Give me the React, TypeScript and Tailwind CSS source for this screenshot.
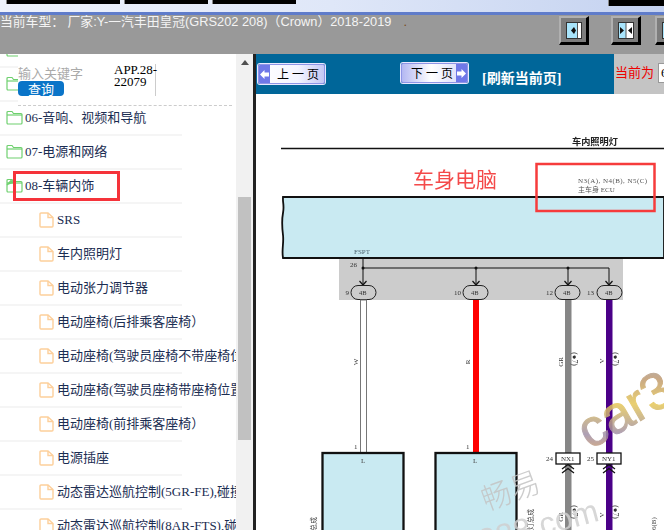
import React from "react";

const serif = "font-['Liberation_Serif','Noto_Sans_CJK_SC',serif]";

function Folder({ open }: { open?: boolean }) {
  return (
    <svg width="17" height="15" viewBox="0 0 17 15" className="shrink-0" fill="none" stroke="#6fd06f" strokeWidth="1.200">
      <path d="M1 13V2.500a1 1 0 0 1 1-1h4l1.500 2H15a1 1 0 0 1 1 1V13a1 1 0 0 1-1 1H2a1 1 0 0 1-1-1z" />
      <path d="M1 5h15" />
      {open && <path d="M1 7 5 2.500l3 2.500" fill="#6fd06f" />}
    </svg>
  );
}

function FileIcon() {
  return (
    <svg width="15" height="16" viewBox="0 0 15 16" className="shrink-0" fill="none" stroke="#fdcf9a" strokeWidth="1.400">
      <path d="M1 2a1 1 0 0 1 1-1H9l5 4.500V14a1 1 0 0 1-1 1H2a1 1 0 0 1-1-1z" />
      <path d="M9 1v4.500h5" />
    </svg>
  );
}

const folders = ["", "", "06-音响、视频和导航", "07-电源和网络", "08-车辆内饰"];
const files = [
  "SRS",
  "车内照明灯",
  "电动张力调节器",
  "电动座椅(后排乘客座椅）",
  "电动座椅(驾驶员座椅不带座椅位置记忆)",
  "电动座椅(驾驶员座椅带座椅位置记忆)",
  "电动座椅(前排乘客座椅）",
  "电源插座",
  "动态雷达巡航控制(5GR-FE),碰撞预警",
  "动态雷达巡航控制(8AR-FTS),碰撞预警",
];

function Row({ children, indent }: { children: React.ReactNode; indent?: boolean }) {
  return (
    <div className={`relative flex h-[34px] shrink-0 items-center whitespace-nowrap pb-[3px] text-[13px] text-[#1b2d52] ${indent ? "gap-[3px] pl-[39px]" : "gap-[2px] pl-[6px]"}`}>
      {children}
      <div className="absolute bottom-0 left-0 h-[2px] w-[182px] bg-[#f5f5f5]" />
    </div>
  );
}

function IconButton({ kind }: { kind: number }) {
  return (
    <div className="flex h-[29px] w-[30px] shrink-0 items-center justify-center border-2 border-b-[3px] border-r-[3px] border-t-[#b0b0b0] border-l-[#b0b0b0] border-r-black border-b-black bg-[#7d7d7d]">
      <svg width="16" height="17" viewBox="0 0 16 17">
        <rect x="0.500" y="0.500" width="15" height="16" fill="#a8e4fb" stroke="#333" />
        {kind === 0 ? (
          <>
            <rect x="12" y="1" width="3" height="15" fill="#fff" />
            <path d="M11.500 1v15" stroke="#555" />
            <path d="M5 8.500 8 5l2 3.500L8 12z" fill="#111" />
          </>
        ) : (
          <>
            <rect x="8" y="1" width="7" height="15" fill="#fff" />
            <path d="M8 1v15" stroke="#555" />
            <path d="M2 5l4 3.500L2 12zM14 5l-4 3.500 4 3.500z" fill="#111" />
          </>
        )}
      </svg>
    </div>
  );
}

function PageButton({ label, dir }: { label: string; dir: "l" | "r" }) {
  const arrow = (
    <span className="flex h-full w-[11px] shrink-0 items-center justify-center bg-[#6f78e8]">
      <svg width="9" height="9" viewBox="0 0 9 9">
        <path d={dir === "l" ? "M0 4.500 4.500 0v2.500H9v4H4.500V9z" : "M9 4.500 4.500 0v2.500H0v4h4.500V9z"} fill="#fff" />
      </svg>
    </span>
  );
  return (
    <div className={`flex h-[20px] w-[67px] items-stretch overflow-hidden rounded-[2px] border border-[#8f95e6] shadow-[0_0_0_1px_#e8e8ff] ${dir === "l" ? "bg-[linear-gradient(90deg,#ffffff,#f4f4ff_60%,#c4c8f4)]" : "bg-[linear-gradient(90deg,#b4b8f2,#ffffff_45%,#d4d6f8)]"}`}>
      {dir === "l" && arrow}
      <span className={`flex-1 whitespace-nowrap font-['Noto_Sans_CJK_SC',sans-serif] text-[12px] leading-[18px] tracking-[3px] text-black ${dir === "l" ? "pl-[7px]" : "pl-[9px]"}`}>{label}</span>
      {dir === "r" && arrow}
    </div>
  );
}

function Diagram() {
  const cjk = "'Liberation Serif','Noto Sans CJK SC',serif";
  return (
    <svg viewBox="256 94 408 436" width="408" height="436" className="block blur-[0.4px]" fontFamily={cjk}>
      <path d="M281 148.500H664" stroke="#111" strokeWidth="1.500" />
      <text x="572" y="145" fontSize="9.200" fontWeight="700" fill="#222">车内照明灯</text>

      <path d="M283 197H664V258H283c-1.500-8 1-15 0-23s-1.500-14 0-22-.5-10 0-16z" fill="#c9eaf2" stroke="#111" strokeWidth="1.800" />
      <text x="413" y="187" fontSize="21" fill="#f44a4a" fontFamily="'Noto Sans CJK SC',sans-serif">车身电脑</text>
      <text x="578" y="183" fontSize="7" letterSpacing="0.45" fill="#555">N3(A), N4(B), N5(C)</text>
      <text x="578" y="192" fontSize="7" fill="#555">主车身 ECU</text>
      <rect x="536.500" y="164" width="118" height="47" fill="none" stroke="#f63c3c" strokeWidth="2.500" />
      <text x="354" y="254" fontSize="7" fill="#4d6470">FSPT</text>

      <rect x="339" y="259" width="284" height="41" fill="#cccccc" />
      <text x="350" y="267" fontSize="7" fill="#333">26</text>
      <path d="M363 258V285M363 268H609V285M476 268V285M568 268V285" stroke="#111" strokeWidth="1" fill="none" />
      {[363, 476, 568].map((x) => (
        <circle key={x} cx={x} cy={268} r="1.500" fill="#111" />
      ))}
      {[363, 476, 568, 609].map((x) => (
        <path key={x} d={`M${x - 3.5} 281 L${x} 285 L${x + 3.5} 281`} stroke="#111" strokeWidth="1.200" fill="none" />
      ))}
      {[
        [351, "9", 345.5],
        [463, "10", 454],
        [555, "12", 546],
        [597, "13", 587],
      ].map(([x, n, lx]) => (
        <g key={n as string}>
          <rect x={x as number} y="285.500" width="25" height="14" rx="7" fill="#cccccc" stroke="#222" strokeWidth="1" />
          <text x={(x as number) + 8} y="295" fontSize="6.500" fill="#333">4B</text>
          <text x={lx as number} y="295" fontSize="7" fill="#333">{n}</text>
        </g>
      ))}

      <rect x="360.500" y="300" width="6" height="153" fill="#fff" stroke="#777" strokeWidth="1" />
      <rect x="473" y="300" width="6" height="153" fill="#ff0000" />
      <rect x="565" y="300" width="6.500" height="230" fill="#868686" />
      <rect x="606" y="300" width="6.500" height="230" fill="#4b0088" />

      {[
        [358, 362, "W"],
        [470, 362, "R"],
        [563, 362, "GR"],
        [604, 361, "V"],
        [563, 517, "GR"],
        [604, 515, "V"],
      ].map(([x, y, t]) => (
        <text key={`${x}${y}`} transform={`translate(${x} ${y}) rotate(-90)`} fontSize="7" fill="#333" textAnchor="middle">{t}</text>
      ))}
      {[
        [572, 359],
        [613, 359],
        [572, 512],
        [613, 512],
      ].map(([x, y]) => (
        <text key={`${x}${y}`} transform={`translate(${x} ${y}) rotate(90)`} fontSize="7.500" fill="#333" textAnchor="middle">(●7)</text>
      ))}

      <rect x="322.500" y="453" width="81" height="90" fill="#c9eaf2" stroke="#111" strokeWidth="2.300" />
      <rect x="435.500" y="453" width="81" height="90" fill="#c9eaf2" stroke="#111" strokeWidth="2.300" />
      <text x="354" y="449" fontSize="7" fill="#333">1</text>
      <text x="466" y="449" fontSize="7" fill="#333">1</text>
      <text x="361" y="463" fontSize="7" fill="#444">L</text>
      <text x="473" y="463" fontSize="7" fill="#444">L</text>

      {[
        [556, "NX1", "24", 546],
        [597, "NY1", "25", 587],
      ].map(([x, t, n, lx]) => (
        <g key={t as string}>
          <rect x={x as number} y="453" width="24" height="11" fill="#fff" stroke="#111" strokeWidth="1.300" />
          <text x={(x as number) + 5} y="461" fontSize="7" fill="#333">{t}</text>
          <text x={lx as number} y="461" fontSize="7" fill="#333">{n}</text>
          <path d={`M${(x as number) + 6} 469l6-4.500 6 4.500M${(x as number) + 6} 473l6-4.500 6 4.500`} fill="none" stroke="#111" strokeWidth="1.300" />
        </g>
      ))}

      <text transform="translate(316 531) rotate(-90)" fontSize="7" fill="#444">总成</text>
      <text transform="translate(533 530) rotate(-90)" fontSize="7" fill="#444">灯总成</text>
      <text transform="translate(656 530) rotate(-90)" fontSize="7" fill="#444">6(B)</text>

      <defs>
        <linearGradient id="carGrad" x1="0" y1="1" x2="1" y2="0">
          <stop offset="0" stopColor="#e8a850" />
          <stop offset="0.25" stopColor="#a08fa8" />
          <stop offset="0.55" stopColor="#e6c858" />
          <stop offset="0.8" stopColor="#c09a70" />
          <stop offset="1" stopColor="#9aa4bc" />
        </linearGradient>
      </defs>
      <text transform="translate(590 450) rotate(-30)" fontSize="52" fontFamily="'Liberation Sans',sans-serif" fill="url(#carGrad)" stroke="url(#carGrad)" strokeWidth="1" opacity="0.85">car3</text>
      <text transform="translate(486 511) rotate(-20)" fontSize="30" fill="#c4c4c4" opacity="0.85" fontFamily="'Noto Sans CJK SC',sans-serif" fontWeight="300">畅易</text>
      <text transform="translate(482 552) rotate(-15)" fontSize="32" fill="#d0d0d0" opacity="0.85" fontFamily="'Liberation Sans',sans-serif">288.com</text>
    </svg>
  );
}

export default function App() {
  return (
    <div className={`flex h-[530px] w-[664px] flex-col overflow-hidden bg-white ${serif}`}>
      {/* top strip */}
      <div className="flex h-[12px] shrink-0 items-start bg-[linear-gradient(90deg,#eef2fc,#dfe7f8_50%,#c4d2f0)]">
        <div className="ml-[6px] h-[4px] w-[114px] border-l border-[#888] bg-black" />
        <div className="ml-[4px] h-[4px] w-[84px] border-l border-[#888] bg-black" />
        <div className="ml-[4px] h-[4px] w-[84px] border-l border-[#888] bg-black" />
        <div className="ml-auto h-[6px] w-[56px] border-l border-[#888] bg-black" />
      </div>
      <div className="h-[3px] shrink-0 bg-[#5f7cca]" />

      {/* car model band */}
      <div className="relative flex h-[39px] shrink-0 bg-[#999999]">
        <div className="flex h-[14px] w-[559px] items-center whitespace-nowrap font-['Liberation_Sans','Noto_Sans_CJK_SC',sans-serif] text-[12.800px] leading-[14px] text-[#f4f4f4]">
          当前车型： 厂家:Y-一汽丰田皇冠(GRS202 208)（Crown）2018-2019
          <span className="ml-[12px] text-[#7a4a20]">.</span>
        </div>
        <div className="absolute left-[559px] top-px flex gap-[22px]">
          <IconButton kind={0} />
          <div className="flex gap-[14px]">
            <IconButton kind={1} />
            <IconButton kind={1} />
          </div>
        </div>
      </div>

      <div className="flex min-h-0 flex-1">
        {/* left tree */}
        <div className="relative flex w-[236px] shrink-0 flex-col overflow-hidden">
          <div className="-mt-[20px] flex flex-col">
            {folders.map((f, i) => (
              <Row key={i}>
                <Folder open={i === 4} />
                {f && <span>{f}</span>}
              </Row>
            ))}
            {files.map((f) => (
              <Row key={f} indent>
                <FileIcon />
                <span>{f}</span>
              </Row>
            ))}
          </div>
          {/* search overlay */}
          <div className="absolute left-[18px] top-0 h-[52px] w-[214px] border-b border-dashed border-[#cccccc] bg-white">
            <div className="absolute left-0 top-[12px] font-['Noto_Sans_CJK_SC',sans-serif] text-[13px] leading-[14px] text-[#aaaaaa]">输入关键字</div>
            <div className="absolute left-0 top-[27px] h-[15px] w-[46px] rounded-[4px] bg-[#0a74c8] text-center font-['Noto_Sans_CJK_SC',sans-serif] text-[13px] leading-[15px] text-white">查询</div>
            <div className="absolute left-[96px] top-[10px] h-[32px] w-[42px] border-r border-[#cccccc] text-[13px] font-normal leading-[12px] text-black">APP.28-22079</div>
          </div>
          {/* highlight */}
          <div className="absolute left-[13px] top-[117px] h-[30px] w-[107px] border-[3px] border-[#f5333a]" />
        </div>

        {/* scrollbar */}
        <div className="flex w-[17px] shrink-0 flex-col items-center bg-[#f1f1f1]">
          <div className="mt-[6px] h-0 w-0 border-x-4 border-b-[5px] border-x-transparent border-b-[#505050]" />
          <div className="mt-[132px] h-[243px] w-[13px] bg-[#c1c1c1]" />
        </div>
        <div className="w-[3px] shrink-0 bg-[#222222]" />

        {/* right */}
        <div className="flex min-w-0 flex-1 flex-col">
          <div className="flex h-[40px] shrink-0">
            <div className="relative flex w-[358px] shrink-0 items-start bg-[#006699] pl-[2px] pt-[10px]">
              <PageButton label="上一页" dir="l" />
              <div className="ml-[76px] -mt-px">
                <PageButton label="下一页" dir="r" />
              </div>
              <span className="ml-[14px] mt-[7px] whitespace-nowrap text-[14px] font-bold leading-[16px] text-white">[刷新当前页]</span>
            </div>
            <div className="flex flex-1 items-start gap-[4px] bg-[#c4c4c4] pl-[1px] pt-[11px]">
              <span className="whitespace-nowrap text-[13px] leading-[16px] text-[#ee0000]">当前为</span>
              <div className="-mt-[2px] h-[20px] w-[20px] shrink-0 border border-[#999] bg-white pl-[2px] text-[13px] leading-[18px]">6</div>
            </div>
          </div>
          <Diagram />
        </div>
      </div>
    </div>
  );
}
